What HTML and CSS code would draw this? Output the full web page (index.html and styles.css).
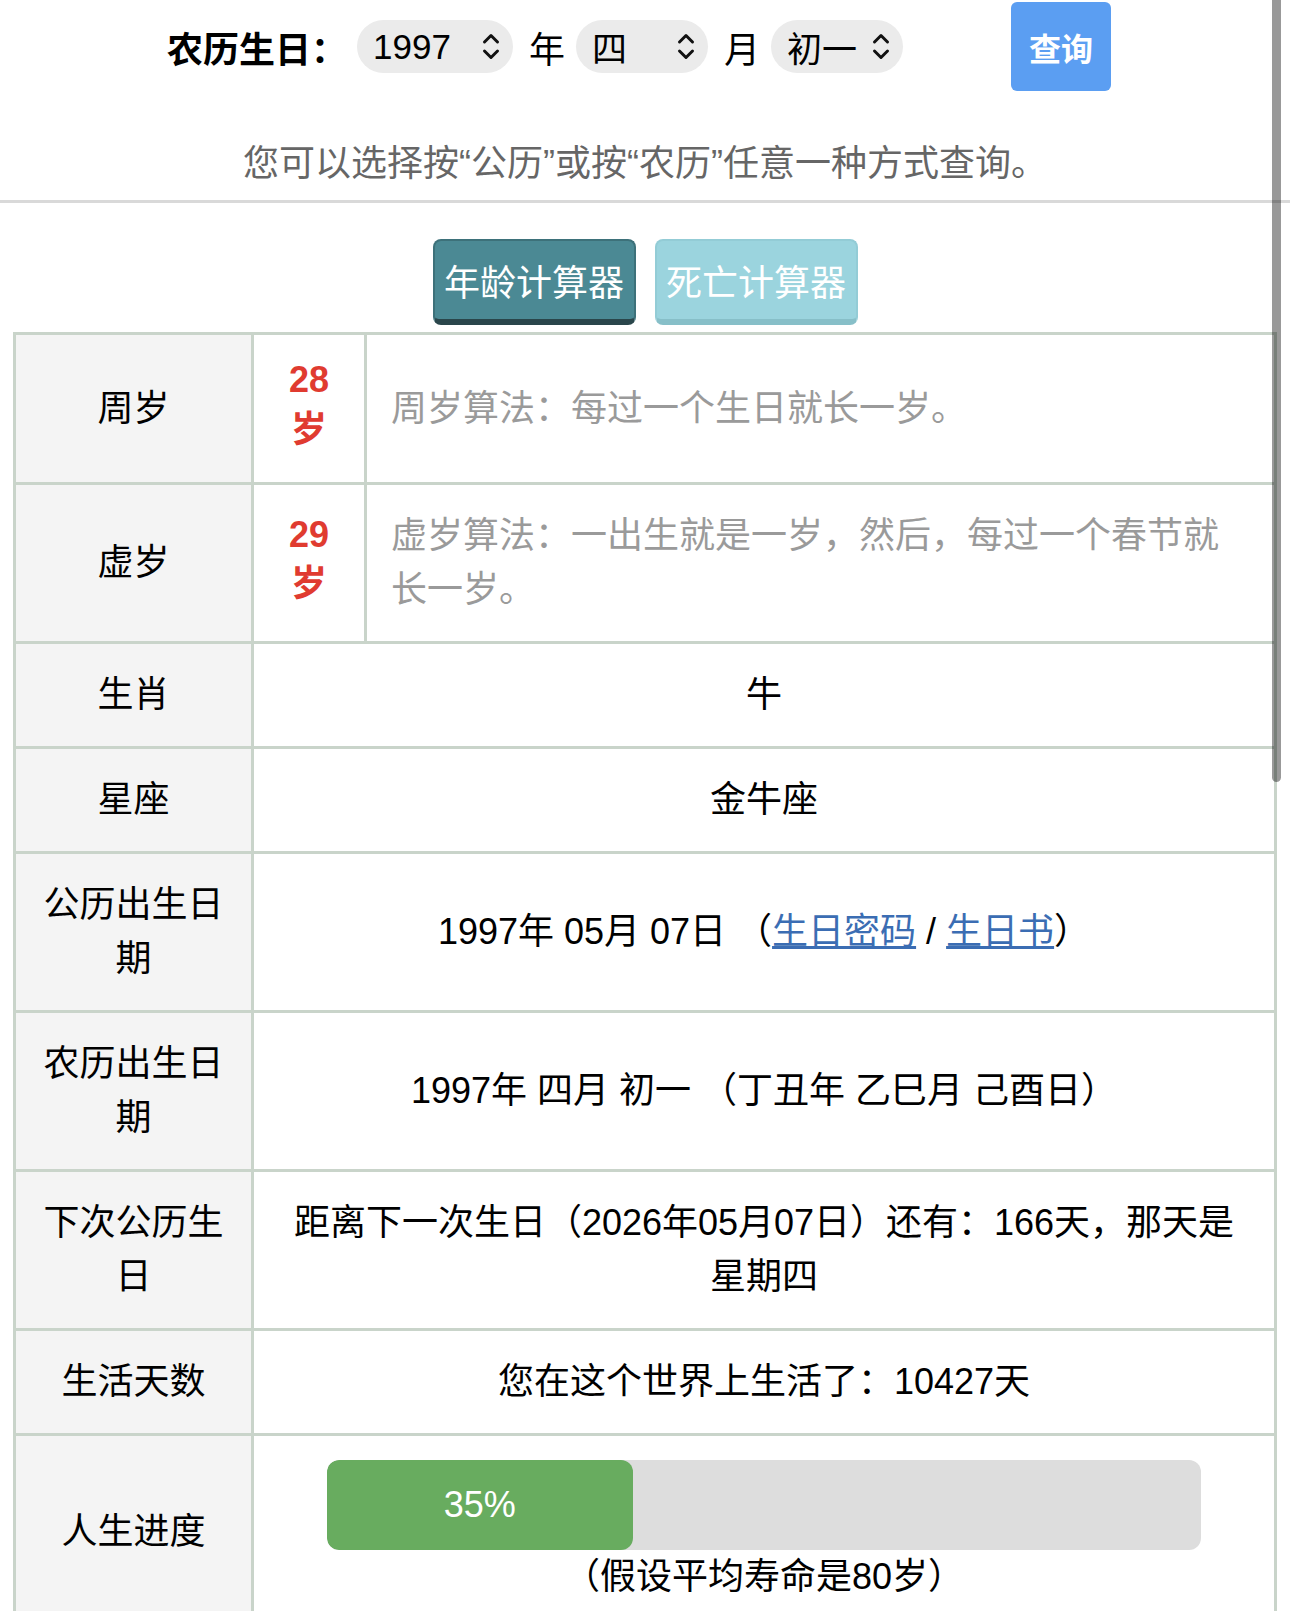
FILE: index.html
```html
<!DOCTYPE html>
<html lang="zh-CN">
<head>
<meta charset="utf-8">
<title>年龄计算器</title>
<link rel="stylesheet" href="styles.css">
</head>
<body>
<div class="top">
  <div class="query">
    <span class="label">农历生日：</span>
    <span class="select sel-year"><span class="val">1997</span><svg class="chev" viewBox="0 0 20 33" width="20" height="33"><path d="M3.5 12 L10 5.5 L16.5 12 M3.5 21 L10 27.5 L16.5 21"/></svg></span>
    <span class="unit">年</span>
    <span class="select sel-small"><span class="val">四</span><svg class="chev" viewBox="0 0 20 33" width="20" height="33"><path d="M3.5 12 L10 5.5 L16.5 12 M3.5 21 L10 27.5 L16.5 21"/></svg></span>
    <span class="unit">月</span>
    <span class="select sel-small"><span class="val">初一</span><svg class="chev" viewBox="0 0 20 33" width="20" height="33"><path d="M3.5 12 L10 5.5 L16.5 12 M3.5 21 L10 27.5 L16.5 21"/></svg></span>
    <button class="btn-query" type="button">查询</button>
  </div>
  <p class="hint">您可以选择按“公历”或按“农历”任意一种方式查询。</p>
</div>

<div class="tabs">
  <a class="tab tab-age">年龄计算器</a>
  <a class="tab tab-death">死亡计算器</a>
</div>

<table class="result">
  <colgroup><col class="c1"><col class="c2"><col></colgroup>
  <tr>
    <td class="key">周岁</td>
    <td class="age">28岁</td>
    <td class="desc">周岁算法：每过一个生日就长一岁。</td>
  </tr>
  <tr>
    <td class="key">虚岁</td>
    <td class="age">29岁</td>
    <td class="desc">虚岁算法：一出生就是一岁，然后，每过一个春节就长一岁。</td>
  </tr>
  <tr>
    <td class="key">生肖</td>
    <td colspan="2">牛</td>
  </tr>
  <tr>
    <td class="key">星座</td>
    <td colspan="2">金牛座</td>
  </tr>
  <tr>
    <td class="key">公历出生日期</td>
    <td colspan="2">1997年 05月 07日 （<a class="lnk" href="#">生日密码</a> / <a class="lnk" href="#">生日书</a>）</td>
  </tr>
  <tr>
    <td class="key">农历出生日期</td>
    <td colspan="2">1997年 四月 初一 （丁丑年 乙巳月 己酉日）</td>
  </tr>
  <tr>
    <td class="key">下次公历生日</td>
    <td colspan="2">距离下一次生日（2026年05月07日）还有：166天，那天是星期四</td>
  </tr>
  <tr>
    <td class="key">生活天数</td>
    <td colspan="2">您在这个世界上生活了：10427天</td>
  </tr>
  <tr>
    <td class="key">人生进度</td>
    <td colspan="2">
      <div class="bar"><div class="fill" style="width:35%">35%</div></div>
      <div class="note">（假设平均寿命是80岁）</div>
    </td>
  </tr>
</table>

<div class="scroll-thumb"></div>
</body>
</html>
```

FILE: styles.css
```css
* { box-sizing: border-box; }

html, body {
  margin: 0;
  padding: 0;
  overflow: hidden;
}

body {
  font-family: "Liberation Sans", "Noto Sans CJK SC", sans-serif;
  color: #000;
  background: #fff;
  padding: 0 13px;
}

.top {
  margin: 0 -13px;
  padding-top: 2px;
  padding-bottom: 9px;
  border-bottom: 3px solid #d9d9d9;
}

.query {
  display: flex;
  align-items: center;
  height: 89px;
  padding-left: 167px;
}

.label {
  font-size: 36px;
  font-weight: 700;
  width: 180px;
  flex: none;
}

.select {
  display: flex;
  align-items: center;
  justify-content: space-between;
  flex: none;
  height: 53px;
  border-radius: 27px;
  background: #ebebeb;
  padding: 0 12px 0 16px;
  font-size: 35px;
}

.sel-year { margin-left: 10px; width: 156px; }
.sel-small { width: 132px; }

.chev {
  fill: none;
  stroke: #111;
  stroke-width: 3;
  stroke-linecap: round;
  stroke-linejoin: round;
}

.unit {
  font-size: 36px;
  margin: 0 11px 0 16px;
}

.btn-query {
  margin-left: 108px;
  width: 100px;
  height: 89px;
  border: none;
  border-radius: 6px;
  background: #5b9ef2;
  color: #fff;
  font-family: inherit;
  font-size: 32px;
  font-weight: 700;
  padding: 0;
}

.hint {
  margin: 46px 0 0;
  font-size: 36px;
  line-height: 54px;
  color: #666;
  text-align: center;
}

.tabs {
  display: flex;
  justify-content: center;
  gap: 19px;
  margin: 36px 0 7px;
}

.tab {
  width: 203px;
  height: 86px;
  border-radius: 8px;
  color: #fff;
  font-size: 36px;
  display: flex;
  align-items: center;
  justify-content: center;
  border-style: solid;
  border-width: 2px 2px 6px;
}

.tab-age {
  background: #4b8994;
  border-color: #3d717a #3d717a #2a464b;
}

.tab-death {
  background: #9bd4de;
  border-color: #93ccd6 #93ccd6 #87bfc8;
}

.result {
  width: 100%;
  border-collapse: collapse;
  table-layout: fixed;
}

.c1 { width: 238px; }
.c2 { width: 113px; }

.result td {
  border: 3px solid #c9d4ca;
  padding: 24px;
  font-size: 36px;
  line-height: 54px;
  text-align: center;
  vertical-align: middle;
}

.result td.key {
  background: #f4f4f4;
}

.result td.age {
  color: #e03b30;
  font-weight: 700;
  line-height: 49.5px;
  padding-top: 20px;
  padding-bottom: 28px;
}

.result td.desc {
  color: #9a9a9a;
  text-align: left;
}

.lnk {
  color: #3b6db3;
  text-decoration: underline;
}

.bar {
  width: 90%;
  margin: 0 auto;
  height: 90px;
  background: #dddddd;
  border-radius: 12px;
  overflow: hidden;
}

.fill {
  height: 100%;
  background: #68ac5f;
  color: #fff;
  line-height: 90px;
  text-align: center;
  border-radius: 12px;
}

.note {
  line-height: 54px;
}

.scroll-thumb {
  position: fixed;
  top: 0;
  right: 9px;
  width: 9px;
  height: 782px;
  background: rgba(0, 0, 0, 0.4);
  border-radius: 0 0 5px 5px;
}
```
